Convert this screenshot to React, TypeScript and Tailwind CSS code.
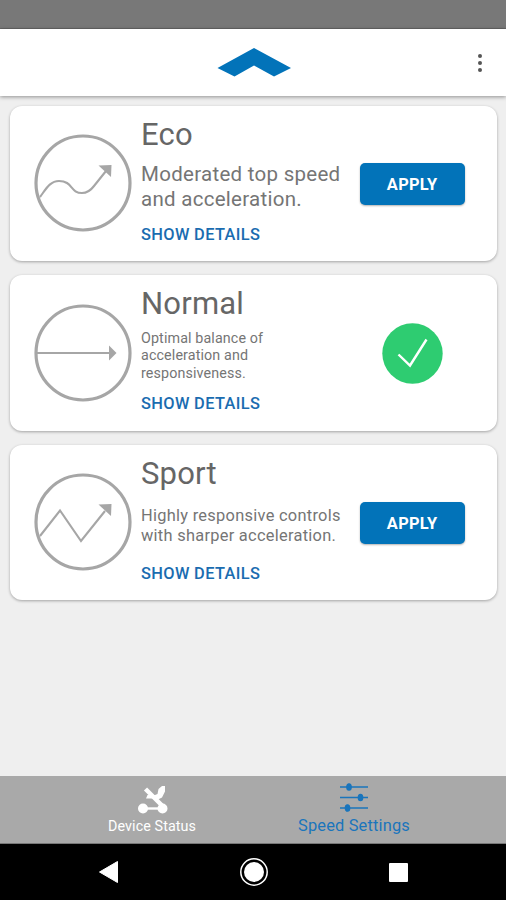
import type { ReactNode } from 'react';

type ModeName = 'Eco' | 'Normal' | 'Sport';

interface SpeedMode {
  name: ModeName;
  lines: string[];
  textClass: string;
  active?: boolean;
}

const modes: SpeedMode[] = [
  {
    name: 'Eco',
    lines: ['Moderated top speed', 'and acceleration.'],
    textClass: 'text-[20.5px] leading-[24.5px] tracking-[0.28px]',
  },
  {
    name: 'Normal',
    lines: ['Optimal balance of', 'acceleration and', 'responsiveness.'],
    textClass: 'text-[14.3px] leading-[17.3px] tracking-[0.12px]',
    active: true,
  },
  {
    name: 'Sport',
    lines: ['Highly responsive controls', 'with sharper acceleration.'],
    textClass: 'text-[16.4px] leading-[19.7px] tracking-[0.28px]',
  },
];

const modeDrawings: Record<ModeName, ReactNode> = {
  Eco: (
    <>
      <path d="M6 63 C12 55 16 47 25 47 C39 47 36 59 48 59 C54 59 57 56 60 52 L72 37" />
      <path d="M64.5 31.5 L77.5 31 L77 43 Z" fill="#a6a6a6" stroke="none" />
    </>
  ),
  Normal: (
    <>
      <path d="M3 49 H76" />
      <path d="M75 41.5 L82.5 49 L75 56.5 Z" fill="#a6a6a6" stroke="none" />
    </>
  ),
  Sport: (
    <>
      <path d="M6 63 L26 37.5 L47 68 L71 38" />
      <path d="M64.5 31.5 L77.5 31 L77 43 Z" fill="#a6a6a6" stroke="none" />
    </>
  ),
};

function ModeIcon({ name }: { name: ModeName }) {
  return (
    <svg className="h-[98px] w-[98px] shrink-0" viewBox="0 0 98 98" fill="none" stroke="#a6a6a6" strokeWidth="2.1" aria-hidden="true">
      <circle cx="49" cy="49" r="47" strokeWidth="3.2" />
      {modeDrawings[name]}
    </svg>
  );
}

function ModeCard({ mode }: { mode: SpeedMode }) {
  return (
    <section className="flex h-[155.5px] items-center rounded-[12px] bg-white pl-6 shadow-[0_1px_3px_rgba(0,0,0,0.32)]">
      <ModeIcon name={mode.name} />
      <div className="ml-[9px] flex h-full w-[218px] shrink-0 flex-col pt-[11px]">
        <h2 className="h-9 text-[31px] leading-9 tracking-[0.2px] text-[#666666]">{mode.name}</h2>
        <div className="flex h-[68px] items-center">
          <p className={`whitespace-nowrap text-[#757575] ${mode.textClass}`}>
            {mode.lines.map((line) => (
              <span key={line} className="block">
                {line}
              </span>
            ))}
          </p>
        </div>
        <button type="button" className="h-7 text-left text-[16.4px] leading-7 font-medium tracking-[0.35px] text-[#1a6cb0]">
          SHOW DETAILS
        </button>
      </div>
      <div className="ml-[0.6px] flex w-[105px] justify-center pt-px">
        {mode.active ? (
          <svg className="h-[61px] w-[61px]" viewBox="0 0 61 61" fill="none" aria-label="Active">
            <circle cx="30.5" cy="30.5" r="30.2" fill="#2ecc71" />
            <path d="M16.5 31.5 L28 42.5 L44.5 16.5" stroke="#ffffff" strokeWidth="2.4" />
          </svg>
        ) : (
          <button
            type="button"
            className="h-[42px] w-[105px] rounded-[5px] bg-[#0273b9] pt-[3px] text-[16.4px] font-bold tracking-[0.3px] text-white shadow-[0_1px_2px_rgba(0,0,0,0.3)]"
          >
            APPLY
          </button>
        )}
      </div>
    </section>
  );
}

function ScooterIcon() {
  return (
    <svg className="h-[30px] w-8" viewBox="0 0 32 30" fill="none" stroke="#ffffff" aria-hidden="true">
      <path d="M7 23.5 H26" strokeWidth="2.4" />
      <circle cx="7" cy="23.5" r="5" fill="#ffffff" stroke="none" />
      <circle cx="26.5" cy="23.5" r="5" fill="#ffffff" stroke="none" />
      <path d="M9.5 4 L27.5 22" strokeWidth="4.4" />
      <path d="M10 13.5 L11.5 10 L19 10 L21.5 9 L22.5 4 L26 1 L29 1 L29 6.5 L26 12.5 L22 14.5 L17 13.5 Z" fill="#ffffff" stroke="none" />
    </svg>
  );
}

function SlidersIcon() {
  return (
    <svg className="h-[30px] w-7" viewBox="0 0 28 30" stroke="#1a75bc" fill="#1a75bc" strokeWidth="1.3" aria-hidden="true">
      <path d="M0 5 H28 M0 15.5 H28 M0 26 H28" />
      <ellipse cx="9" cy="5" rx="2.2" ry="3.2" />
      <ellipse cx="20.5" cy="15.5" rx="2.2" ry="3.2" />
      <ellipse cx="7.5" cy="26" rx="2.2" ry="3.2" />
    </svg>
  );
}

export default function App() {
  return (
    <div className="flex h-[900px] w-[506px] flex-col overflow-hidden bg-[#efefef] font-['Roboto',sans-serif]">
      <div className="h-[29px] shrink-0 border-b border-[#666666] bg-[#787878]" />
      <header className="z-10 grid h-[67px] shrink-0 grid-cols-3 items-center bg-white shadow-[0_1px_4px_rgba(0,0,0,0.4)]">
        <span />
        <svg className="ml-[2px] h-[29px] w-[74px] justify-self-center" viewBox="0 0 74 29" aria-hidden="true">
          <path d="M37 0 L74 20 L57 28.5 L37 17.5 L17.5 28.5 L0.5 20 Z" fill="#0273b9" />
        </svg>
        <button type="button" aria-label="More" className="mr-6 justify-self-end">
          <svg className="h-5 w-1" viewBox="0 0 4 20" fill="#555555" aria-hidden="true">
            <circle cx="2" cy="3" r="2" />
            <circle cx="2" cy="10" r="2" />
            <circle cx="2" cy="17" r="2" />
          </svg>
        </button>
      </header>

      <main className="flex flex-1 flex-col gap-[14px] pt-[9.5px] pr-[9px] pl-[10px]">
        {modes.map((mode) => (
          <ModeCard key={mode.name} mode={mode} />
        ))}
      </main>

      <nav className="flex h-[68px] shrink-0 justify-center border-b border-[#777777] bg-[#a9a9a9]">
        <button type="button" className="flex w-[202px] flex-col items-center pt-[9px] text-white">
          <ScooterIcon />
          <span className="-mt-px text-[14.3px] leading-6 tracking-[0.1px]">Device Status</span>
        </button>
        <button type="button" className="flex w-[202px] flex-col items-center pt-[6px] text-[#1a75bc]">
          <SlidersIcon />
          <span className="mt-[2px] text-[16.4px] leading-6 tracking-[0.18px]">Speed Settings</span>
        </button>
      </nav>

      <div className="flex h-14 shrink-0 items-center justify-between bg-black pr-[98px] pl-[98px]">
        <svg className="h-6 w-[21px]" viewBox="0 0 21 24" fill="#ffffff" stroke="#ffffff" strokeLinejoin="round" aria-hidden="true">
          <path d="M1.5 12 L19.5 1.5 V22.5 Z" />
        </svg>
        <svg className="mr-px h-7 w-7" viewBox="0 0 28 28" fill="none" aria-hidden="true">
          <circle cx="14" cy="14" r="13.2" stroke="#ffffff" strokeWidth="1.5" />
          <circle cx="14" cy="14" r="10" fill="#ffffff" />
        </svg>
        <i className="h-[19px] w-[19px] rounded-[1px] bg-white" />
      </div>
    </div>
  );
}
